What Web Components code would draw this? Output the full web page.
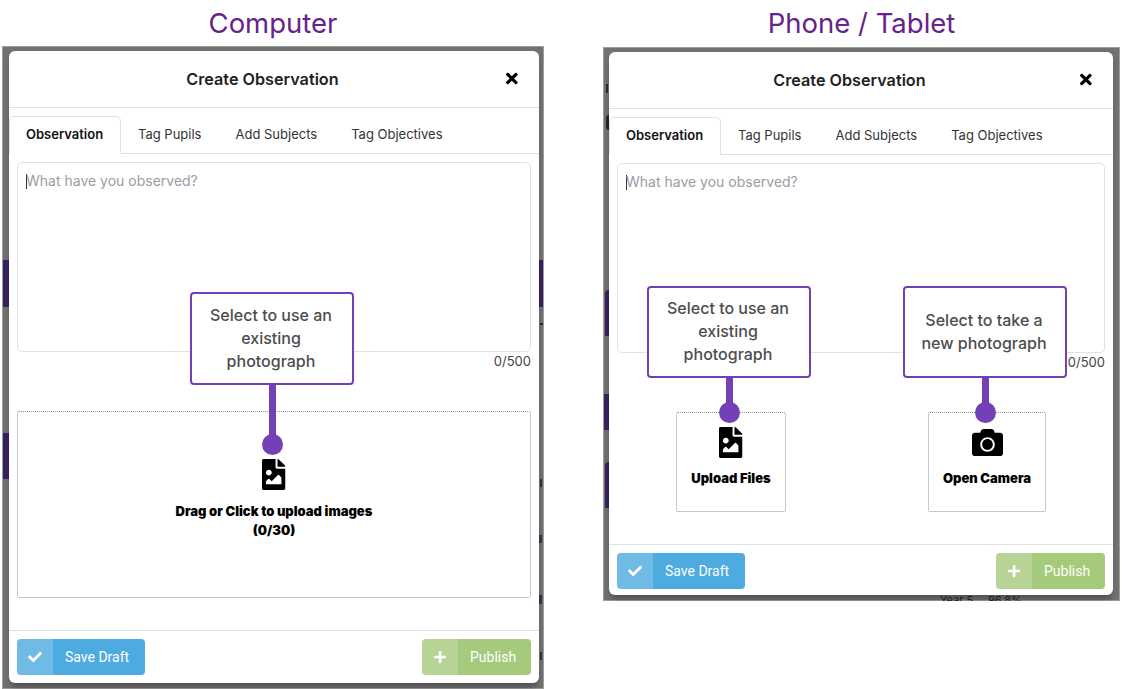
<!DOCTYPE html>
<html lang="en">
<head>
<meta charset="utf-8">
<title>Create Observation</title>
<style>
  html, body { margin: 0; height: 100%; background: #fff; overflow: hidden; }
  body { font-family: Inter, "Liberation Sans", sans-serif; color: #222; }
  .page { display: flex; align-items: flex-start; padding-left: 2px; gap: 59px; }
</style>
</head>
<body>
<div class="page">
  <device-frame heading="Computer" style="--frame-w: 542px; --frame-h: 643px; --head-h: 46px; --pad: 5px 5px 6px 7px;">
    <dim-strip style="--x: 1px; --y: 214px; --w: 6px; --h: 47px;"></dim-strip>
    <dim-strip style="--x: 1px; --y: 387px; --w: 6px; --h: 46px;"></dim-strip>
    <dim-strip style="--x: 537px; --y: 214px; --w: 4px; --h: 47px;"></dim-strip>
    <dim-strip style="--x: 538px; --y: 277px; --w: 3px; --h: 2px; --tone: #26262b;"></dim-strip>
    <dim-strip style="--x: 538px; --y: 433px; --w: 2px; --h: 8px; --tone: #3b3038;"></dim-strip>
    <dim-strip style="--x: 537px; --y: 489px; --w: 3px; --h: 8px; --tone: #2b3a4d;"></dim-strip>
    <dim-strip style="--x: 537px; --y: 549px; --w: 3px; --h: 9px; --tone: #2b3a4d;"></dim-strip>
    <dim-strip style="--x: 538px; --y: 606px; --w: 2px; --h: 8px; --tone: #3b3038;"></dim-strip>
    <obs-modal style="--modal-h: 632px; --foot-h: 53px;">
      <drop-zone label="Drag or Click to upload images" count="(0/30)" icon="file-image"
        style="--zone-w: 514px; --zone-h: 187px; --zone-pt: 47px; --icon-gap: 12px; margin-top: 41px;"></drop-zone>
      <call-out style="--x: 181px; --y: 241px; --w: 164px; --h: 93px; --stem: 52px;">Select to use an existing photograph</call-out>
    </obs-modal>
  </device-frame>

  <device-frame heading="Phone / Tablet" style="--frame-w: 517px; --frame-h: 554px; --head-h: 47px; --head-nudge: 1px; --pad: 5px 7px 6px 6px;">
    <dim-strip style="--x: 2px; --y: 243px; --w: 4px; --h: 46px; --round: 5px 0 0 0;"></dim-strip>
    <dim-strip style="--x: 1px; --y: 347px; --w: 5px; --h: 36px;"></dim-strip>
    <dim-strip style="--x: 2px; --y: 415px; --w: 4px; --h: 46px; --round: 5px 0 0 0;"></dim-strip>
    <dim-strip style="--x: 3px; --y: 37px; --w: 2px; --h: 9px; --tone: #2f2740;"></dim-strip>
    <dim-strip style="--x: 3px; --y: 68px; --w: 3px; --h: 15px; --tone: #2d2416; --round: 3px 0 0 3px;"></dim-strip>
    <obs-modal style="--modal-h: 543px; --foot-h: 51px;">
      <div style="display:flex; justify-content:space-between; padding: 0 59px; margin-top: 41px;">
        <drop-zone label="Upload Files" icon="file-image" style="--zone-w: 110px; --zone-h: 100px; --zone-pt: 14px;"></drop-zone>
        <drop-zone label="Open Camera" icon="camera" style="--zone-w: 118px; --zone-h: 100px; --zone-pt: 14px;"></drop-zone>
      </div>
      <call-out style="--x: 38px; --y: 234px; --w: 164px; --h: 92px; --stem: 27px; padding-bottom: 2px;">Select to use an existing photograph</call-out>
      <call-out style="--x: 294px; --y: 234px; --w: 164px; --h: 92px; --stem: 27px;">Select to take a new photograph</call-out>
    </obs-modal>
    <dim-text style="--x: 337px; --y: 546px;">Year 5</dim-text>
    <dim-text style="--x: 385px; --y: 546px;">96.8%</dim-text>
  </device-frame>
</div>

<script>
const ICONS = {
  "file-image": ["0 0 384 512", "M384 121.941V128H256V0h6.059a24 24 0 0 1 16.97 7.029l97.941 97.941a24.002 24.002 0 0 1 7.03 16.971zM248 160c-13.2 0-24-10.8-24-24V0H24C10.745 0 0 10.745 0 24v464c0 13.255 10.745 24 24 24h336c13.255 0 24-10.745 24-24V160H248zm-135.455 16c26.51 0 48 21.49 48 48s-21.49 48-48 48-48-21.49-48-48 21.491-48 48-48zm208 240h-256l.485-48.485L104.545 328c4.686-4.686 11.799-4.201 16.485.485L160.545 368 264.06 264.485c4.686-4.686 12.284-4.686 16.971 0L320.545 304v112z"],
  camera: ["0 0 512 512", "M512 144v288c0 26.5-21.5 48-48 48H48c-26.5 0-48-21.5-48-48V144c0-26.5 21.5-48 48-48h88l12.3-32.9c7-18.7 24.9-31.1 44.9-31.1h125.5c20 0 37.9 12.4 44.9 31.1L376 96h88c26.5 0 48 21.5 48 48zM376 288c0-66.2-53.8-120-120-120s-120 53.8-120 120 53.8 120 120 120 120-53.8 120-120zm-32 0c0 48.5-39.5 88-88 88s-88-39.5-88-88 39.5-88 88-88 88 39.5 88 88z"],
  check: ["0 0 512 512", "M173.898 439.404l-166.4-166.4c-9.997-9.997-9.997-26.206 0-36.204l36.203-36.204c9.997-9.998 26.207-9.998 36.204 0L192 312.69 432.095 72.596c9.997-9.997 26.207-9.997 36.204 0l36.203 36.204c9.997 9.997 9.997 26.206 0 36.204l-294.4 294.401c-9.998 9.997-26.207 9.997-36.204-.001z"],
  plus: ["0 0 448 512", "M416 208H272V64c0-17.67-14.33-32-32-32h-32c-17.67 0-32 14.33-32 32v144H32c-17.67 0-32 14.33-32 32v32c0 17.67 14.33 32 32 32h144v144c0 17.67 14.33 32 32 32h32c17.67 0 32-14.33 32-32V304h144c17.67 0 32-14.33 32-32v-32c0-17.67-14.33-32-32-32z"],
  times: ["0 0 352 512", "M242.72 256l100.07-100.07c12.28-12.28 12.28-32.19 0-44.48l-22.24-22.24c-12.28-12.28-32.19-12.28-44.48 0L176 189.28 75.93 89.21c-12.28-12.28-32.19-12.28-44.48 0L9.21 111.45c-12.28 12.28-12.28 32.19 0 44.48L109.28 256 9.21 356.07c-12.28 12.28-12.28 32.19 0 44.48l22.24 22.24c12.28 12.28 32.2 12.28 44.48 0L176 322.72l100.07 100.07c12.28 12.28 32.2 12.28 44.48 0l22.24-22.24c12.28-12.28 12.28-32.19 0-44.48L242.72 256z"]
};

customElements.define(
  "fa-icon",
  class FaIcon extends HTMLElement {
    static observedAttributes = ["name"];
    constructor() {
      super();
      this.attachShadow({ mode: "open" });
    }
    attributeChangedCallback(_attr, _old, name) {
      const [box, d] = ICONS[name];
      this.shadowRoot.innerHTML = `
      <style>
        :host { display: inline-flex; height: var(--size, 16px); }
        svg { height: 100%; display: block; fill: currentColor; }
      </style>
      <svg viewBox="${box}" aria-hidden="true"><path d="${d}"></path></svg>
      `;
    }
  }
);

customElements.define(
  "device-frame",
  class DeviceFrame extends HTMLElement {
    constructor() {
      super();
      this.attachShadow({ mode: "open" });
      this.shadowRoot.innerHTML = `
      <style>
        :host { display: block; width: var(--frame-w); }
        h2 {
          margin: 0;
          box-sizing: border-box;
          height: var(--head-h);
          padding-bottom: var(--head-nudge, 0);
          display: flex;
          align-items: center;
          justify-content: center;
          font: 400 27.5px Inter, sans-serif;
          color: #68228b;
        }
        .frame {
          position: relative;
          box-sizing: border-box;
          height: var(--frame-h);
          padding: var(--pad);
          background: #717171;
          box-shadow: inset 0 0 0 1px #9c9c9c;
          overflow: hidden;
        }
      </style>
      <h2></h2>
      <div class="frame"><slot></slot></div>
      `;
    }
    connectedCallback() {
      this.shadowRoot.querySelector("h2").textContent = this.getAttribute("heading");
    }
  }
);

// dark page bits showing through the backdrop
customElements.define(
  "dim-strip",
  class DimStrip extends HTMLElement {
    constructor() {
      super();
      this.attachShadow({ mode: "open" });
      this.shadowRoot.innerHTML = `
      <style>
        :host {
          position: absolute;
          left: var(--x);
          top: var(--y);
          width: var(--w);
          height: var(--h);
          background: var(--tone, #372060);
          border-radius: var(--round, 0);
        }
      </style>
      `;
    }
  }
);

customElements.define(
  "dim-text",
  class DimText extends HTMLElement {
    constructor() {
      super();
      this.attachShadow({ mode: "open" });
      this.shadowRoot.innerHTML = `
      <style>
        :host {
          position: absolute;
          left: var(--x);
          top: var(--y);
          font-size: 11px;
          line-height: 14px;
          color: #1d1d24;
        }
      </style>
      <slot></slot>
      `;
    }
  }
);

customElements.define(
  "obs-tabs",
  class ObsTabs extends HTMLElement {
    constructor() {
      super();
      this.attachShadow({ mode: "open" });
      this.shadowRoot.innerHTML = `
      <style>
        :host {
          display: flex;
          height: 38px;
          box-sizing: border-box;
          margin-top: 8px;
          border-bottom: 1px solid #dee2e6;
          font-size: 13px;
          color: #333;
        }
        span {
          display: flex;
          align-items: center;
          padding: 0 17px 2px;
          height: 38px;
          box-sizing: border-box;
        }
        .active {
          font-weight: 600;
          color: #111;
          background: #fff;
          border: 1px solid #dee2e6;
          border-bottom-color: #fff;
          border-radius: 5px 5px 0 0;
          padding: 0 16px 2px;
          width: 112px;
        }
      </style>
      <span class="active">Observation</span>
      <span>Tag Pupils</span>
      <span>Add Subjects</span>
      <span>Tag Objectives</span>
      `;
    }
  }
);

customElements.define(
  "action-button",
  class ActionButton extends HTMLElement {
    constructor() {
      super();
      this.attachShadow({ mode: "open" });
      this.shadowRoot.innerHTML = `
      <style>
        :host {
          display: flex;
          box-sizing: border-box;
          width: var(--btn-w);
          height: 36px;
          border-radius: 4px;
          overflow: hidden;
          background: var(--tone);
          color: #fff;
          font: 400 14px Roboto, sans-serif;
        }
        .ico {
          width: 36px;
          display: flex;
          align-items: center;
          justify-content: center;
          background: rgba(255, 255, 255, 0.2);
          --size: 14px;
        }
        .txt {
          display: flex;
          align-items: center;
          padding-left: 12px;
        }
      </style>
      <div class="ico"><fa-icon></fa-icon></div>
      <div class="txt"><slot></slot></div>
      `;
    }
    connectedCallback() {
      this.shadowRoot.querySelector("fa-icon").setAttribute("name", this.getAttribute("icon"));
    }
  }
);

customElements.define(
  "obs-modal",
  class ObsModal extends HTMLElement {
    constructor() {
      super();
      this.attachShadow({ mode: "open" });
      this.shadowRoot.innerHTML = `
      <style>
        :host {
          display: flex;
          flex-direction: column;
          position: relative;
          height: var(--modal-h);
          background: #fff;
          border-radius: 6px;
          box-shadow: 0 6px 6px -2px rgba(0, 0, 0, 0.3);
        }
        header {
          height: 57px;
          flex: none;
          box-sizing: border-box;
          display: flex;
          align-items: center;
          justify-content: center;
          position: relative;
          border-bottom: 1px solid #dee2e6;
          padding-right: 23px;
          font-size: 16.2px;
          font-weight: 600;
          color: #222;
        }
        .close {
          position: absolute;
          right: 21px;
          top: 19px;
          color: #000;
          --size: 17px;
        }
        .body { flex: 1; padding: 0 8px; min-height: 0; }
        .note {
          box-sizing: border-box;
          height: 190px;
          margin-top: 8px;
          padding: 9px 8px;
          border: 1px solid #dee2e6;
          border-radius: 5px;
          font-size: 14px;
          line-height: 17px;
          color: #9a9ca3;
        }
        .caret { display: inline-block; width: 1px; height: 15px; background: #333; vertical-align: -3px; margin-right: -1px; }
        .count {
          text-align: right;
          font-size: 13px;
          line-height: 18px;
          color: #444;
        }
        footer {
          flex: none;
          box-sizing: border-box;
          height: var(--foot-h);
          display: flex;
          justify-content: space-between;
          padding: 8px 8px 0;
          border-top: 1px solid #dee2e6;
        }
        .save { --tone: #4dabe0; --btn-w: 128px; }
        .publish { --tone: #a5ca7c; --btn-w: 109px; }
      </style>
      <header>Create Observation<fa-icon class="close" name="times"></fa-icon></header>
      <obs-tabs></obs-tabs>
      <div class="body">
        <div class="note"><span class="caret"></span>What have you observed?</div>
        <div class="count">0/500</div>
        <slot></slot>
      </div>
      <footer>
        <action-button class="save" icon="check">Save Draft</action-button>
        <action-button class="publish" icon="plus">Publish</action-button>
      </footer>
      `;
    }
  }
);

customElements.define(
  "drop-zone",
  class DropZone extends HTMLElement {
    constructor() {
      super();
      this.attachShadow({ mode: "open" });
      this.shadowRoot.innerHTML = `
      <style>
        :host {
          display: flex;
          flex-direction: column;
          align-items: center;
          box-sizing: border-box;
          width: var(--zone-w);
          height: var(--zone-h);
          padding-top: var(--zone-pt);
          border: 1px dotted #8f8f98;
          border-left: 1px solid #c8cad4;
          border-right: 1px solid #c8cad4;
          border-radius: 2px;
          color: #000;
          font-size: 13px;
          font-weight: 900;
          line-height: 19px;
          text-align: center;
        }
        fa-icon { --size: 31px; margin-bottom: var(--icon-gap, 11px); }
      </style>
      <fa-icon></fa-icon>
      <div class="label"></div>
      <div class="count"></div>
      `;
    }
    connectedCallback() {
      const root = this.shadowRoot;
      root.querySelector("fa-icon").setAttribute("name", this.getAttribute("icon"));
      root.querySelector(".label").textContent = this.getAttribute("label");
      root.querySelector(".count").textContent = this.getAttribute("count") || "";
    }
  }
);

customElements.define(
  "call-out",
  class CallOut extends HTMLElement {
    constructor() {
      super();
      this.attachShadow({ mode: "open" });
      this.shadowRoot.innerHTML = `
      <style>
        :host {
          position: absolute;
          left: var(--x);
          top: var(--y);
          width: var(--w);
          height: var(--h);
          box-sizing: border-box;
          display: flex;
          align-items: center;
          justify-content: center;
          padding: 0 16px 0 14px;
          background: #fff;
          border: 2px solid #7340b5;
          border-radius: 4px;
          font-size: 16px;
          font-weight: 500;
          line-height: 23px;
          text-align: center;
          color: #4d4d4d;
        }
        .stem {
          position: absolute;
          left: 50%;
          top: 100%;
          width: 7px;
          margin-left: -3px;
          height: var(--stem);
          background: #7340b5;
        }
        .dot {
          position: absolute;
          left: 50%;
          top: calc(100% + var(--stem) - 1px);
          width: 21px;
          height: 21px;
          margin-left: -10px;
          border-radius: 50%;
          background: #7340b5;
        }
      </style>
      <slot></slot>
      <i class="stem"></i><i class="dot"></i>
      `;
    }
  }
);
</script>
</body>
</html>
